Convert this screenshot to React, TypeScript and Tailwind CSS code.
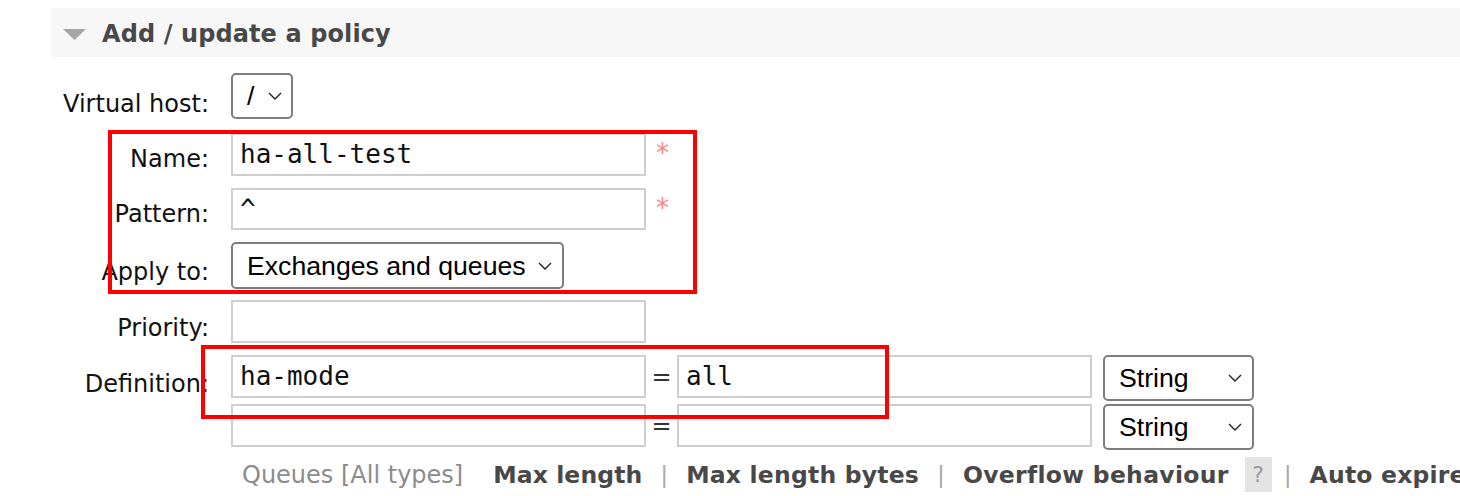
import React from "react";

const Chevron = ({ w = 14 }: { w?: number }) => (
  <svg width={w} height="8" viewBox="0 0 14 8" className="shrink-0">
    <polyline points="1,1 7,7 13,1" fill="none" stroke="#222" strokeWidth="1.4" />
  </svg>
);

const Input = ({ value = "", w = 415, h = 43 }: { value?: string; w?: number; h?: number }) => (
  <div
    className="border-2 border-[#cfcfcf] bg-white pl-[7px] pt-[4px] shrink-0"
    style={{ width: w, height: h }}
  >
    <span className="block text-[26px] leading-[30px] text-[#111] [font-family:'DejaVu_Sans_Mono',monospace]">
      {value}
    </span>
  </div>
);

const Select = ({
  value,
  w,
  h = 46,
  pl = 14,
  pr = 10,
}: {
  value: string;
  w: number;
  h?: number;
  pl?: number;
  pr?: number;
}) => (
  <div
    className="border-2 border-[#7d7d7d] rounded-[5px] bg-white flex items-center justify-between shrink-0"
    style={{ width: w, height: h, paddingLeft: pl, paddingRight: pr }}
  >
    <span className="text-[26.67px] leading-[30px] text-black [font-family:'Liberation_Sans',Arial,sans-serif]">
      {value}
    </span>
    <Chevron />
  </div>
);

const Label = ({ text, pt }: { text: string; pt: number }) => (
  <div
    className="w-[209px] shrink-0 text-right text-[24px] leading-[28px] text-[#111]"
    style={{ paddingTop: pt }}
  >
    {text}
  </div>
);

const Star = () => (
  <span className="ml-[10px] mt-[6px] text-[26px] leading-[28px] text-[#ff8585]">*</span>
);

const Sep = () => <span className="shrink-0 text-[#aaa] font-normal mx-[18px]">|</span>;

export default function App() {
  return (
    <div className="relative w-[1460px] h-[496px] overflow-hidden bg-white [font-family:'DejaVu_Sans',Verdana,sans-serif]">
      {/* Header */}
      <div className="ml-[51px] mt-[8px] h-[49px] bg-[#f7f7f7] flex items-start pl-[12px] pt-[12px]">
        <svg width="23" height="11" viewBox="0 0 23 11" className="mt-[9px]">
          <polygon points="0,0 23,0 11.5,11" fill="#a5a5a5" />
        </svg>
        <span className="ml-[16px] text-[24px] leading-[28px] font-bold text-[#484848] tracking-[0.1px]">
          Add / update a policy
        </span>
      </div>

      {/* Form */}
      <div className="mt-[16px] flex flex-col">
        <div className="flex">
          <Label text="Virtual host:" pt={17} />
          <div className="ml-[22px]">
            <Select value="/" w={62} h={46} pl={14} pr={9} />
          </div>
        </div>

        <div className="flex mt-[14px]">
          <Label text="Name:" pt={12} />
          <div className="ml-[22px] flex items-start">
            <Input value="ha-all-test" h={43} />
            <Star />
          </div>
        </div>

        <div className="flex mt-[12px]">
          <Label text="Pattern:" pt={12} />
          <div className="ml-[22px] flex items-start">
            <Input value="^" h={42} />
            <Star />
          </div>
        </div>

        <div className="flex mt-[12px]">
          <Label text="Apply to:" pt={16} />
          <div className="ml-[22px]">
            <Select value="Exchanges and queues" w={333} h={47} pl={14} pr={10} />
          </div>
        </div>

        <div className="flex mt-[11px]">
          <Label text="Priority:" pt={14} />
          <div className="ml-[22px]">
            <Input h={43} />
          </div>
        </div>

        <div className="flex mt-[12px]">
          <Label text="Definition:" pt={15} />
          <div className="ml-[22px] flex flex-col">
            <div className="flex items-start">
              <Input value="ha-mode" h={43} />
              <span className="w-[31px] text-center text-[24px] leading-[28px] pt-[8px] text-[#333]">=</span>
              <Input value="all" h={43} />
              <div className="ml-[11px]">
                <Select value="String" w={151} h={46} pl={14} pr={10} />
              </div>
            </div>
            <div className="flex items-start mt-[3px]">
              <Input h={43} />
              <span className="w-[31px] text-center text-[24px] leading-[28px] pt-[8px] text-[#333]">=</span>
              <Input h={43} />
              <div className="ml-[11px]">
                <Select value="String" w={151} h={46} pl={14} pr={10} />
              </div>
            </div>
          </div>
        </div>

        <div className="flex items-center h-[35px] mt-[7px] ml-[242px] whitespace-nowrap text-[23.5px] leading-[28px]">
          <span className="shrink-0 text-[#8c8c8c] text-[24px]">Queues [All types]</span>
          <span className="shrink-0 ml-[30px] font-bold text-[#484848] tracking-[0.1px]">Max length</span>
          <Sep />
          <span className="shrink-0 font-bold text-[#484848] tracking-[0.2px]">Max length bytes</span>
          <Sep />
          <span className="shrink-0 font-bold text-[#484848] tracking-[0.3px]">Overflow behaviour</span>
          <span className="shrink-0 ml-[16px] w-[27px] h-[35px] bg-[#e4e4e4] text-[#9a9a9a] flex items-center justify-center text-[22px]">
            ?
          </span>
          <span className="shrink-0 text-[#aaa] font-normal ml-[12px] mr-[18px]">|</span>
          <span className="shrink-0 font-bold text-[#484848] tracking-[0.2px]">Auto expire</span>
        </div>
      </div>

      {/* Annotation overlays */}
      <div className="absolute left-[108px] top-[130px] w-[589px] h-[164px] border-4 border-[#ff0000]" />
      <div className="absolute left-[201px] top-[345px] w-[688px] h-[74px] border-4 border-[#ff0000]" />
    </div>
  );
}
